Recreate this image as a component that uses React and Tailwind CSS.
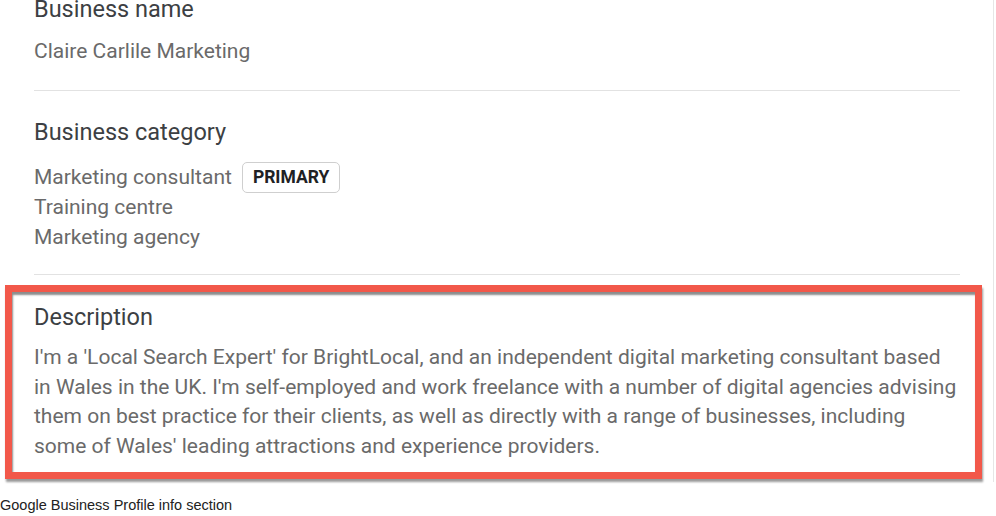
const CATEGORIES = ['Marketing consultant', 'Training centre', 'Marketing agency']

const DESCRIPTION = [
  "I'm a 'Local Search Expert' for BrightLocal, and an independent digital marketing consultant based",
  "in Wales in the UK. I'm self-employed and work freelance with a number of digital agencies advising",
  'them on best practice for their clients, as well as directly with a range of businesses, including',
  "some of Wales' leading attractions and experience providers.",
]

function Heading({ children, className = '' }) {
  return (
    <h2 className={`text-[23.5px] font-normal text-[#3c4043] ${className}`}>
      {children}
    </h2>
  )
}

export default function App() {
  return (
    <div className="w-[996px] h-[516px] bg-white overflow-hidden font-['Roboto',sans-serif]">
      {/* Screenshot area */}
      <div className="w-[994px] h-[482px] border-r border-[#e6e6e6] flex flex-col">
        <div className="px-[34px]">
          {/* Business name */}
          <Heading className="leading-[18px]">Business name</Heading>
          <p className="mt-[18px] text-[21px] leading-[30px] text-[#6a6a6a]">
            Claire Carlile Marketing
          </p>
          <div className="mt-[24px] w-[926px] border-t border-[#e2e2e2]" />

          {/* Business category */}
          <Heading className="mt-[26px] leading-[30px]">Business category</Heading>
          <ul className="mt-[15px] text-[21px] leading-[30px] text-[#6a6a6a]">
            {CATEGORIES.map((c, i) => (
              <li key={c} className="flex items-center h-[30px]">
                {c}
                {i === 0 && (
                  <span className="ml-[10px] h-[31px] px-[10px] flex items-center rounded-[5px] border border-[#cfcfcf] text-[17.5px] font-bold text-[#202124]">
                    PRIMARY
                  </span>
                )}
              </li>
            ))}
          </ul>
          <div className="mt-[22px] w-[926px] border-t border-[#e2e2e2]" />
        </div>

        {/* Description, highlighted */}
        <div className="mt-[10px] ml-[5px] w-[977px] h-[194px] border-[7px] border-[#f2584a] shadow-[1px_3px_2px_rgba(0,0,0,0.4)]">
          <div className="h-full pl-[22px] pt-[10px] shadow-[inset_1px_3px_2px_rgba(0,0,0,0.45)]">
            <Heading className="leading-[30px]">Description</Heading>
            <p className="mt-[11px] text-[21px] leading-[29.6px] text-[#6a6a6a]">
              {DESCRIPTION.map(line => (
                <span key={line} className="block whitespace-nowrap">{line}</span>
              ))}
            </p>
          </div>
        </div>
      </div>

      {/* Caption */}
      <p className="mt-[13px] text-[14.5px] leading-[20px] text-[#222] font-['Liberation_Sans',Arial,sans-serif]">
        Google Business Profile info section
      </p>
    </div>
  )
}
